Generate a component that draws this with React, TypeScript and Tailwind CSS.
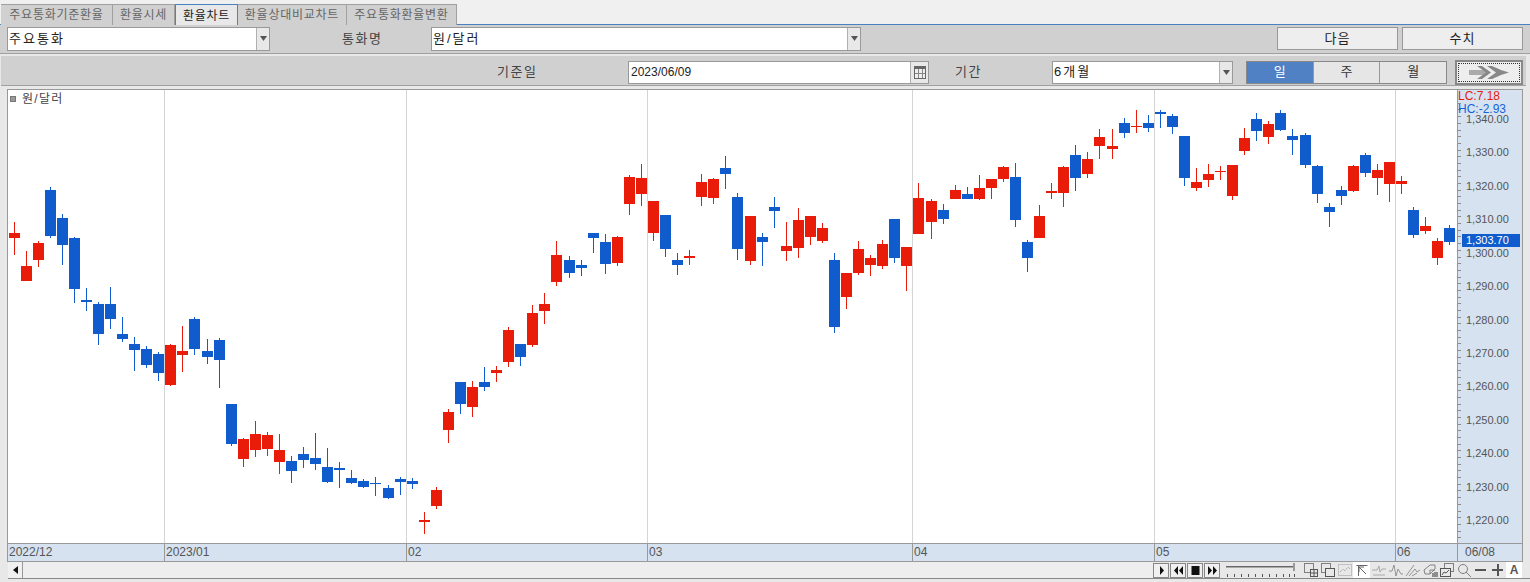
import type { ReactNode } from 'react';

type Candle = [number, number, number, number, number, 'r' | 'b'];

// x, body top, body bottom, wick top, wick bottom, colour
const candles: Candle[] = [
  [14, 233, 238, 222, 255, 'r'], [26, 266, 281, 251, 281, 'r'], [38, 243, 260, 241, 267, 'r'],
  [50, 190, 236, 187, 238, 'b'], [62, 218, 245, 214, 265, 'b'], [74, 238, 289, 237, 303, 'b'],
  [86, 300, 302, 288, 311, 'b'], [98, 304, 334, 302, 345, 'b'], [110, 304, 319, 287, 329, 'b'],
  [122, 334, 339, 317, 342, 'b'], [134, 344, 350, 337, 371, 'b'], [146, 349, 365, 346, 368, 'b'],
  [158, 354, 373, 352, 381, 'b'], [170, 345, 385, 344, 386, 'r'], [182, 351, 355, 326, 372, 'r'],
  [194, 319, 349, 317, 355, 'b'], [207, 351, 357, 339, 364, 'b'], [219, 340, 360, 338, 388, 'b'],
  [231, 404, 444, 404, 446, 'b'], [243, 439, 459, 438, 467, 'r'], [255, 434, 450, 421, 457, 'r'],
  [267, 435, 449, 432, 456, 'r'], [279, 450, 462, 434, 474, 'r'], [291, 461, 471, 456, 483, 'b'],
  [303, 454, 460, 447, 468, 'b'], [315, 458, 464, 433, 470, 'b'], [327, 467, 482, 448, 483, 'b'],
  [339, 468, 470, 462, 488, 'b'], [351, 478, 483, 470, 484, 'b'], [363, 481, 487, 479, 488, 'b'],
  [375, 483, 484, 477, 496, 'b'], [388, 488, 498, 485, 499, 'b'], [400, 479, 482, 477, 495, 'b'],
  [412, 481, 484, 478, 489, 'b'], [424, 520, 522, 512, 534, 'r'], [436, 490, 506, 487, 509, 'r'],
  [448, 412, 430, 409, 443, 'r'], [460, 382, 404, 382, 414, 'b'], [472, 387, 407, 381, 417, 'r'],
  [484, 382, 387, 367, 391, 'b'], [496, 370, 373, 366, 382, 'r'], [508, 330, 362, 327, 367, 'r'],
  [520, 344, 357, 344, 366, 'b'], [532, 313, 345, 305, 347, 'r'], [544, 304, 311, 293, 324, 'r'],
  [556, 255, 282, 241, 286, 'r'], [569, 260, 273, 256, 278, 'b'], [581, 265, 268, 260, 276, 'b'],
  [593, 233, 238, 233, 253, 'b'], [605, 242, 264, 234, 274, 'b'], [617, 237, 263, 236, 266, 'r'],
  [629, 177, 204, 175, 215, 'r'], [641, 178, 194, 164, 206, 'r'], [653, 201, 233, 201, 241, 'r'],
  [665, 215, 249, 215, 257, 'b'], [677, 260, 265, 253, 275, 'b'], [689, 256, 258, 250, 265, 'r'],
  [701, 182, 197, 174, 206, 'r'], [713, 179, 198, 178, 204, 'r'], [725, 168, 174, 156, 189, 'b'],
  [737, 197, 249, 193, 260, 'b'], [750, 216, 261, 216, 265, 'r'], [762, 237, 242, 233, 266, 'b'],
  [774, 207, 211, 197, 228, 'b'], [786, 246, 251, 222, 261, 'r'], [798, 220, 248, 208, 258, 'r'],
  [810, 216, 237, 216, 245, 'r'], [822, 228, 241, 223, 243, 'r'], [834, 260, 327, 253, 333, 'b'],
  [846, 273, 297, 273, 309, 'r'], [858, 249, 273, 241, 275, 'r'], [870, 258, 265, 255, 276, 'r'],
  [882, 244, 266, 240, 269, 'r'], [894, 219, 258, 219, 263, 'b'], [906, 247, 266, 247, 291, 'r'],
  [918, 198, 234, 183, 234, 'r'], [931, 201, 222, 199, 239, 'r'], [943, 210, 219, 204, 224, 'b'],
  [955, 190, 199, 185, 199, 'r'], [967, 194, 199, 187, 199, 'b'], [979, 188, 199, 175, 200, 'r'],
  [991, 179, 188, 179, 199, 'r'], [1003, 167, 179, 166, 182, 'r'], [1015, 177, 220, 163, 227, 'b'],
  [1027, 242, 258, 240, 272, 'b'], [1039, 216, 238, 205, 238, 'r'], [1051, 191, 193, 183, 199, 'r'],
  [1063, 167, 193, 166, 207, 'r'], [1075, 155, 178, 145, 191, 'b'], [1087, 159, 174, 152, 178, 'r'],
  [1099, 137, 146, 129, 159, 'r'], [1112, 146, 149, 129, 159, 'r'], [1124, 123, 133, 118, 138, 'b'],
  [1136, 126, 127, 110, 133, 'r'], [1148, 123, 128, 115, 132, 'b'], [1160, 112, 114, 110, 128, 'b'],
  [1172, 116, 127, 114, 134, 'b'], [1184, 136, 178, 136, 186, 'b'], [1196, 182, 188, 168, 191, 'r'],
  [1208, 174, 180, 164, 187, 'r'], [1220, 171, 172, 166, 180, 'r'], [1232, 165, 196, 165, 200, 'r'],
  [1244, 138, 151, 128, 155, 'r'], [1256, 119, 131, 113, 141, 'b'], [1268, 124, 137, 121, 144, 'r'],
  [1280, 113, 130, 110, 131, 'b'], [1292, 136, 140, 129, 155, 'b'], [1305, 135, 165, 133, 168, 'b'],
  [1317, 166, 194, 165, 203, 'b'], [1329, 207, 212, 203, 227, 'b'], [1341, 190, 196, 186, 205, 'b'],
  [1353, 166, 191, 165, 192, 'r'], [1365, 155, 173, 153, 177, 'b'], [1377, 170, 178, 164, 195, 'r'],
  [1389, 162, 184, 162, 202, 'r'], [1401, 181, 184, 176, 194, 'r'], [1413, 210, 235, 207, 238, 'b'],
  [1425, 226, 231, 217, 234, 'r'], [1437, 241, 258, 238, 265, 'r'], [1449, 228, 242, 225, 245, 'b'],
];

const gridXs = [164, 406, 647, 912, 1154, 1395];

const axisCells = [
  { label: '2022/12', w: 'w-[157px]' },
  { label: '2023/01', w: 'w-[242px]' },
  { label: '02', w: 'w-[241px]' },
  { label: '03', w: 'w-[265px]' },
  { label: '04', w: 'w-[242px]' },
  { label: '05', w: 'w-[241px]' },
  { label: '06', w: 'w-[62px]' },
];

const priceLevels = [1340, 1330, 1320, 1310, 1300, 1290, 1280, 1270, 1260, 1250, 1240, 1230, 1220];

function priceY(price: number) {
  return 119.5 + ((1340 - price) / 10) * 33.42;
}

function fmt(price: number) {
  return price.toLocaleString('en-US') + '.00';
}

function CandleChart() {
  return (
    <svg className="block w-[1449px] h-[453px]" viewBox="8 90 1449 453" shapeRendering="crispEdges">
      {gridXs.map((x) => (
        <rect key={x} x={x} y={90} width={1} height={453} fill="#d4d4d4" />
      ))}
      {candles.map(([x, bt, bb, wt, wb, c]) => {
        const color = c === 'r' ? '#e81c09' : '#115ccc';
        return (
          <g key={x} fill={color}>
            <rect x={x} y={wt} width={1} height={wb - wt} />
            <rect x={x - 5} y={bt} width={11} height={bb - bt} />
          </g>
        );
      })}
    </svg>
  );
}

function PriceAxis() {
  const minor: number[] = [];
  for (let p = 1345; p >= 1215; p -= 2) minor.push(p);
  return (
    <svg className="block w-[62px] h-[453px]" viewBox="1458 90 62 453">
      {minor.map((p) => (
        <rect key={p} x={1458} y={Math.round(priceY(p))} width={p % 10 === 0 ? 6 : 3} height={1} fill="#8a8a8a" shapeRendering="crispEdges" />
      ))}
      {priceLevels.map((p) => (
        <text key={p} x={1466} y={priceY(p) + 3.5} fontSize={11} fill="#555555" fontFamily="'Liberation Sans', sans-serif">
          {fmt(p)}
        </text>
      ))}
    </svg>
  );
}

function DropArrow() {
  return (
    <div className="w-[13px] h-full bg-[#e8e8e8] border-l border-[#b0b0b0] flex items-center justify-center shrink-0">
      <svg width="7" height="5" viewBox="0 0 7 5">
        <path d="M0 0h7L3.5 5z" fill="#555" />
      </svg>
    </div>
  );
}

function Select({ value, className }: { value: string; className: string }) {
  return (
    <div className={`h-[24px] bg-white border border-[#999] flex items-center ${className}`}>
      <span className="flex-1 pl-[1px] text-[13px] text-[#222] tracking-[2px] truncate">{value}</span>
      <DropArrow />
    </div>
  );
}

function Tab({ label, w, active }: { label: string; w: string; active?: boolean }) {
  return (
    <div
      className={`${w} flex items-center justify-center text-[12px] tracking-[0.75px] ${
        active
          ? 'h-[22px] mb-[-1px] bg-[#e8e8e8] text-[#222] border border-b-0 border-[#4a80c4]'
          : 'h-[21px] bg-[#d0d0d0] text-[#666] border-r border-t border-[#a0a0a0]'
      }`}
    >
      {label}
    </div>
  );
}

function PlainButton({ label }: { label: string }) {
  return (
    <div className="w-[121px] h-[23px] bg-[#eeeeee] border border-[#999] flex items-center justify-center text-[13px] tracking-[1px] text-[#222]">
      {label}
    </div>
  );
}

function PlayerBtn({ children }: { children: ReactNode }) {
  return (
    <div className="w-[16px] h-[15px] bg-[#f0f0f0] border border-[#888] flex items-center justify-center">
      <svg width="11" height="9" viewBox="0 0 11 9" fill="#111">
        {children}
      </svg>
    </div>
  );
}

function Tool({ children, white, w = 'w-[17px]' }: { children: ReactNode; white?: boolean; w?: string }) {
  return (
    <div className={`${w} h-[16px] flex items-center justify-center ${white ? 'bg-white' : ''}`}>
      <svg width="16" height="16" viewBox="0 0 16 16" fill="none" stroke="#808080" strokeWidth="1">
        {children}
      </svg>
    </div>
  );
}

function Toolbar() {
  return (
    <div className="flex items-center h-full">
      <div className="flex gap-[1px]">
        <PlayerBtn><path d="M4 0l4 4.5L4 9z" /></PlayerBtn>
        <PlayerBtn><path d="M5 0v9L1 4.5zM10 0v9L6 4.5z" /></PlayerBtn>
        <PlayerBtn><rect x="1.5" y="0" width="8" height="9" /></PlayerBtn>
        <PlayerBtn><path d="M1 0l4 4.5L1 9zM6 0l4 4.5L6 9z" /></PlayerBtn>
      </div>
      <svg className="ml-[6px]" width="70" height="16" viewBox="0 0 70 16" shapeRendering="crispEdges">
        <rect x="0" y="4" width="67" height="1" fill="#666" />
        <rect x="0" y="5" width="67" height="1" fill="#aaa" />
        <rect x="67" y="1" width="2" height="8" fill="#999" />
        {[1, 8, 15, 22, 29, 36, 43, 50, 57, 63, 68].map((x) => (
          <rect key={x} x={x} y={12} width={1} height={3} fill="#555" />
        ))}
      </svg>
      <div className="flex items-center ml-[6px]">
        <Tool>
          <rect x="1.5" y="1.5" width="9" height="9" />
          <rect x="7.5" y="7.5" width="7" height="7" fill="#e8e8e8" stroke="#555" />
          <path d="M11 8v6M8 11h6" stroke="#555" />
        </Tool>
        <Tool>
          <rect x="1.5" y="1.5" width="9" height="9" />
          <rect x="5.5" y="6.5" width="9" height="8" fill="#e8e8e8" stroke="#555" />
        </Tool>
        <Tool>
          <rect x="1.5" y="2.5" width="13" height="11" strokeDasharray="1 1" stroke="#999" />
          <path d="M3 10l3-3 2 2 3-4 2 2" strokeDasharray="1 1" stroke="#999" />
        </Tool>
        <Tool white>
          <path d="M2.5 3.5h11M4.5 4v10M5 5l7 7M5 5h5M5 5v5" stroke="#666" />
        </Tool>
        <Tool>
          <path d="M1 8h5l2-4 1 6 2-3h4M2 13h12" strokeWidth="0.8" stroke="#999" />
        </Tool>
        <Tool>
          <path d="M1 9l3 0 2-6 2 11 2-7 3 5h2" strokeWidth="0.8" />
        </Tool>
        <Tool>
          <path d="M1 14L9 3M4 14l6-7 2 3 3-2M7 14l5-3" strokeWidth="0.8" />
        </Tool>
        <Tool>
          <path d="M2 8l6-5h5v4l-5 5H3zM8 8h5M8 8v4" />
          <path d="M11 11v4M13 10v5M15 10v5" stroke="#333" />
        </Tool>
        <Tool>
          <rect x="5.5" y="1.5" width="9" height="8" />
          <rect x="1.5" y="6.5" width="10" height="8" fill="#e8e8e8" stroke="#555" />
          <path d="M3 13l2-3 2 1 3-3" stroke="#555" />
        </Tool>
        <Tool>
          <circle cx="7" cy="7" r="4.5" />
          <path d="M10 10l5 5" />
        </Tool>
        <svg className="ml-[3px]" width="12" height="16" viewBox="0 0 12 16" shapeRendering="crispEdges">
          <rect x="0" y="7" width="11" height="2" fill="#555" />
        </svg>
        <svg className="ml-[5px]" width="12" height="16" viewBox="0 0 12 16" shapeRendering="crispEdges">
          <rect x="0" y="7" width="11" height="2" fill="#555" />
          <rect x="4.5" y="2" width="2" height="12" fill="#555" />
        </svg>
        <div className="ml-[2px] w-[16px] h-[16px] bg-white flex items-center justify-center text-[12px] font-bold text-[#555]">A</div>
      </div>
    </div>
  );
}

export default function App() {
  return (
    <div className="w-[1530px] h-[582px] bg-[#e8e8e8] overflow-hidden flex flex-col font-['Liberation_Sans','Noto_Sans_CJK_KR',sans-serif]">
      <div className="h-[25px] pt-[4px] pl-[1px] flex bg-[#f0f0f0] border-b border-[#4a80c4] shrink-0">
        <Tab label="주요통화기준환율" w="w-[112px]" />
        <Tab label="환율시세" w="w-[62px]" />
        <Tab label="환율차트" w="w-[63px]" active />
        <Tab label="환율상대비교차트" w="w-[109px]" />
        <Tab label="주요통화환율변환" w="w-[110px]" />
      </div>

      <div className="h-[29px] bg-[#d0d0d0] border-b border-[#a0a0a0] flex items-center pb-[1px] shrink-0">
        <Select value="주요통화" className="ml-[7px] w-[263px]" />
        <span className="ml-[72px] w-[89px] text-[13px] text-[#444] tracking-[1.5px]">통화명</span>
        <Select value="원/달러" className="w-[430px]" />
        <div className="ml-auto mr-[7px] flex gap-[4px]">
          <PlainButton label="다음" />
          <PlainButton label="수치" />
        </div>
      </div>

      <div className="h-[30px] w-[1525px] mt-[2px] ml-[1px] pt-[3px] bg-[#d0d0d0] border-b border-[#a0a0a0] flex items-center shrink-0">
        <span className="ml-[496px] w-[131px] text-[13px] text-[#444] tracking-[1.5px]">기준일</span>
        <div className="w-[301px] h-[23px] bg-white border border-[#999] flex items-center">
          <span className="flex-1 pl-[2px] text-[12px] text-[#222]">2023/06/09</span>
          <div className="w-[18px] h-full bg-[#e8e8e8] border-l border-[#b0b0b0] flex items-center justify-center">
            <svg width="12" height="14" viewBox="0 0 12 14" shapeRendering="crispEdges">
              <rect x="0" y="1" width="12" height="13" fill="#666" />
              <rect x="1" y="4" width="10" height="9" fill="#eee" />
              <path d="M4 4v9M8 4v9M1 8h10" stroke="#888" />
            </svg>
          </div>
        </div>
        <span className="ml-[26px] w-[97px] text-[13px] text-[#444] tracking-[1.5px]">기간</span>
        <Select value="6개월" className="w-[181px] !h-[23px]" />
        <div className="ml-[13px] w-[201px] h-[23px] border border-[#888] flex text-[13px]">
          <div className="flex-1 bg-[#4f81c4] text-white flex items-center justify-center">일</div>
          <div className="flex-1 bg-[#e6e6e6] text-[#333] flex items-center justify-center border-l border-[#999]">주</div>
          <div className="flex-1 bg-[#e6e6e6] text-[#333] flex items-center justify-center border-l border-[#999]">월</div>
        </div>
        <div className="ml-[8px] w-[68px] h-[25px] border-2 border-[#888] bg-[#eeeeee] p-[1px]">
          <div className="w-full h-full border border-dotted border-[#333] flex items-center justify-center">
            <svg width="40" height="13" viewBox="0 0 40 13" fill="#888">
              <path d="M0 4h18v5H0z" fill="#aaa" />
              <path d="M8 0h5l9 6.5-9 6.5H8l9-6.5z" />
              <path d="M18 0h5l9 4 8 2.5-8 2.5-9 4h-5l9-6.5z" />
            </svg>
          </div>
        </div>
      </div>

      <div className="mt-[3px] ml-[7px] w-[1516px] border border-b-0 border-[#999] bg-white shrink-0">
        <div className="flex relative">
          <div className="relative w-[1449px] h-[453px]">
            <CandleChart />
            <div className="absolute left-[2px] top-0 flex items-center gap-[6px] text-[12px] tracking-[1.3px] text-[#444]">
              <span className="w-[6px] h-[6px] bg-[#999] border border-[#777]" />
              원/달러
            </div>
          </div>
          <div className="relative w-[65px] h-[453px] bg-[#d6e2f0] border-l border-[#999]">
            <PriceAxis />
            <div className="absolute left-0 top-0 text-[12px] leading-[12px] text-[#e81c09]">LC:7.18</div>
            <div className="absolute left-0 top-[13px] text-[12px] leading-[12px] text-[#1565d8]">HC:-2.93</div>
            <div className="absolute left-[4px] top-[144px] w-[58px] h-[13px] bg-[#115ccc] text-white text-[11px] leading-[13px] pl-[4px]">1,303.70</div>
          </div>
        </div>
        <div className="flex h-[19px] bg-[#d6e2f0] border-y border-[#999] text-[12px] text-[#555] leading-[17px]">
          {axisCells.map((c) => (
            <div key={c.label} className={`${c.w} h-full pl-[1px] border-r border-[#999] shrink-0`}>
              {c.label}
            </div>
          ))}
          <div className="pl-[7px]">06/08</div>
        </div>
      </div>

      <div className="h-[17px] ml-[8px] flex items-center border-b border-[#888] shrink-0">
        <div className="w-[15px] h-full bg-[#f0f0f0] border-r border-[#999] flex items-center justify-center">
          <svg width="5" height="8" viewBox="0 0 5 8"><path d="M5 0v8L0 4z" fill="#111" /></svg>
        </div>
        <div className="w-[1130px] h-full bg-[#eeeeee]" />
        <Toolbar />
      </div>
    </div>
  );
}
